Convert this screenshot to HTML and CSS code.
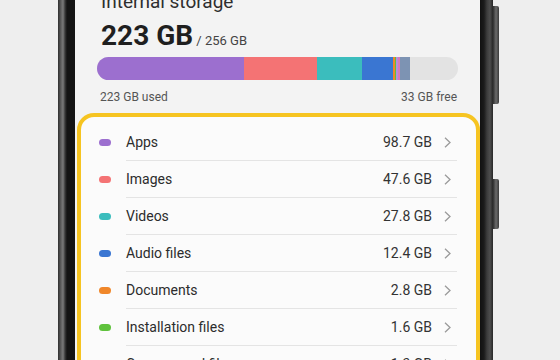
FILE: index.html
```html
<!DOCTYPE html>
<html lang="en">

<head>
    <meta charset="UTF-8">
    <meta name="viewport" content="width=device-width, initial-scale=1.0">
    <title>Storage</title>
    <link rel="stylesheet" href="styles.css">
</head>

<body>
    <div class="phone">
        <span class="side-btn side-btn-power"></span>
        <span class="side-btn side-btn-volume"></span>

        <div class="screen">
            <!-- header -->
            <div class="storage-head">
                <div class="title">Internal storage</div>
                <div class="total"><span class="used-big">223 GB</span><span class="of"> / 256 GB</span></div>

                <div class="bar">
                    <span class="seg seg-apps" style="width: 147px"></span>
                    <span class="seg seg-images" style="width: 73px"></span>
                    <span class="seg seg-videos" style="width: 45px"></span>
                    <span class="seg seg-audio" style="width: 31px"></span>
                    <span class="seg seg-docs" style="width: 2px"></span>
                    <span class="seg seg-install" style="width: 1px"></span>
                    <span class="seg seg-zip" style="width: 2px"></span>
                    <span class="seg seg-pink" style="width: 2px"></span>
                    <span class="seg seg-other" style="width: 10px"></span>
                </div>

                <div class="bar-labels">
                    <span>223 GB used</span>
                    <span>33 GB free</span>
                </div>
            </div>

            <!-- categories -->
            <div class="card">
                <div class="row">
                    <span class="dot seg-apps"></span>
                    <div class="row-main">
                        <span class="label">Apps</span>
                        <span class="size">98.7 GB</span>
                        <svg class="chev" width="7" height="11" viewBox="0 0 7 11"><polyline points="1,0.8 6,5.5 1,10.2" /></svg>
                    </div>
                </div>
                <div class="row">
                    <span class="dot seg-images"></span>
                    <div class="row-main">
                        <span class="label">Images</span>
                        <span class="size">47.6 GB</span>
                        <svg class="chev" width="7" height="11" viewBox="0 0 7 11"><polyline points="1,0.8 6,5.5 1,10.2" /></svg>
                    </div>
                </div>
                <div class="row">
                    <span class="dot seg-videos"></span>
                    <div class="row-main">
                        <span class="label">Videos</span>
                        <span class="size">27.8 GB</span>
                        <svg class="chev" width="7" height="11" viewBox="0 0 7 11"><polyline points="1,0.8 6,5.5 1,10.2" /></svg>
                    </div>
                </div>
                <div class="row">
                    <span class="dot seg-audio"></span>
                    <div class="row-main">
                        <span class="label">Audio files</span>
                        <span class="size">12.4 GB</span>
                        <svg class="chev" width="7" height="11" viewBox="0 0 7 11"><polyline points="1,0.8 6,5.5 1,10.2" /></svg>
                    </div>
                </div>
                <div class="row">
                    <span class="dot seg-docs"></span>
                    <div class="row-main">
                        <span class="label">Documents</span>
                        <span class="size">2.8 GB</span>
                        <svg class="chev" width="7" height="11" viewBox="0 0 7 11"><polyline points="1,0.8 6,5.5 1,10.2" /></svg>
                    </div>
                </div>
                <div class="row">
                    <span class="dot seg-install"></span>
                    <div class="row-main">
                        <span class="label">Installation files</span>
                        <span class="size">1.6 GB</span>
                        <svg class="chev" width="7" height="11" viewBox="0 0 7 11"><polyline points="1,0.8 6,5.5 1,10.2" /></svg>
                    </div>
                </div>
                <div class="row">
                    <span class="dot seg-zip"></span>
                    <div class="row-main">
                        <span class="label">Compressed files</span>
                        <span class="size">1.3 GB</span>
                        <svg class="chev" width="7" height="11" viewBox="0 0 7 11"><polyline points="1,0.8 6,5.5 1,10.2" /></svg>
                    </div>
                </div>
            </div>
        </div>
    </div>
</body>

</html>
```

FILE: styles.css
```css
* {
    margin: 0;
    padding: 0;
    box-sizing: border-box;
}

body {
    height: 360px;
    overflow: hidden;
    background-color: #eeeeee;
    font-family: Roboto, "Liberation Sans", sans-serif;
    color: #2a2a2a;
}

/* --------  PHONE ------------------- */
.phone {
    position: relative;
    width: 435px;
    height: 400px;
    margin-left: 58px;
    padding: 0 13px 0 17px;
    background: linear-gradient(to right,
            #2e2e2e 0,
            #5f5f5f 3px,
            #7a7a7a 5px,
            #3a3a3a 7px,
            #141414 9px,
            #111111 calc(100% - 13px),
            #1b1b1b calc(100% - 9px),
            #3c3c3c calc(100% - 6px),
            #4d4d4d calc(100% - 3px),
            #262626 100%);
}

.side-btn {
    position: absolute;
    right: -6px;
    width: 6px;
    border-radius: 0 2px 2px 0;
    background: linear-gradient(to right, #2d2d2d, #6b6b6b 50%, #3a3a3a);
}

.side-btn-power {
    top: 15px;
    height: 98px;
}

.side-btn-volume {
    top: 188px;
    height: 50px;
}

.screen {
    height: 100%;
    background-color: #f3f3f3;
}

/* --------  HEADER ------------------- */
.storage-head {
    padding: 0 22px;
}

.title {
    margin-top: -9px;
    padding-left: 4px;
    font-size: 19px;
    line-height: 22px;
    color: #2e2e2e;
}

.total {
    margin-top: 6px;
    padding-left: 4px;
    height: 34px;
    line-height: 34px;
}

.used-big {
    font-size: 28px;
    font-weight: 700;
    color: #1f1f1f;
}

.of {
    font-size: 13px;
    color: #444;
}

.bar {
    display: flex;
    height: 23px;
    margin-top: 4px;
    border-radius: 12px;
    overflow: hidden;
    background-color: #e3e3e3;
}

.seg {
    height: 100%;
}

.seg-apps {
    background-color: #9c6fcf;
}

.seg-images {
    background-color: #f47374;
}

.seg-videos {
    background-color: #3bbdbd;
}

.seg-audio {
    background-color: #3a76d2;
}

.seg-docs {
    background-color: #f0872a;
}

.seg-install {
    background-color: #5fc23c;
}

.seg-zip {
    background-color: #b58ee0;
}

.seg-pink {
    background-color: #d97bb6;
}

.seg-other {
    background-color: #7d93b3;
}

.bar-labels {
    display: flex;
    justify-content: space-between;
    margin-top: 9px;
    padding: 0 1px 0 3px;
    font-size: 12px;
    line-height: 16px;
    color: #555;
}

/* --------  CARD ------------------- */
.card {
    margin: 8px 0 0 2px;
    padding: 7px 19px 0 18px;
    background-color: #fbfbfb;
    border: 4px solid #f6c421;
    border-radius: 17px;
}

.row {
    display: flex;
    align-items: center;
    height: 37px;
}

.dot {
    width: 12px;
    height: 7px;
    margin-right: 15px;
    border-radius: 4px;
    flex-shrink: 0;
}

.row-main {
    flex: 1;
    display: flex;
    align-items: center;
    height: 100%;
    padding-right: 6px;
    border-bottom: 1px solid #e4e4e4;
    font-size: 14px;
}

.label {
    flex: 1;
    color: #2c2c2c;
}

.size {
    color: #333;
}

.chev {
    margin-left: 12px;
    fill: none;
    stroke: #9a9a9a;
    stroke-width: 1.3;
}
```
